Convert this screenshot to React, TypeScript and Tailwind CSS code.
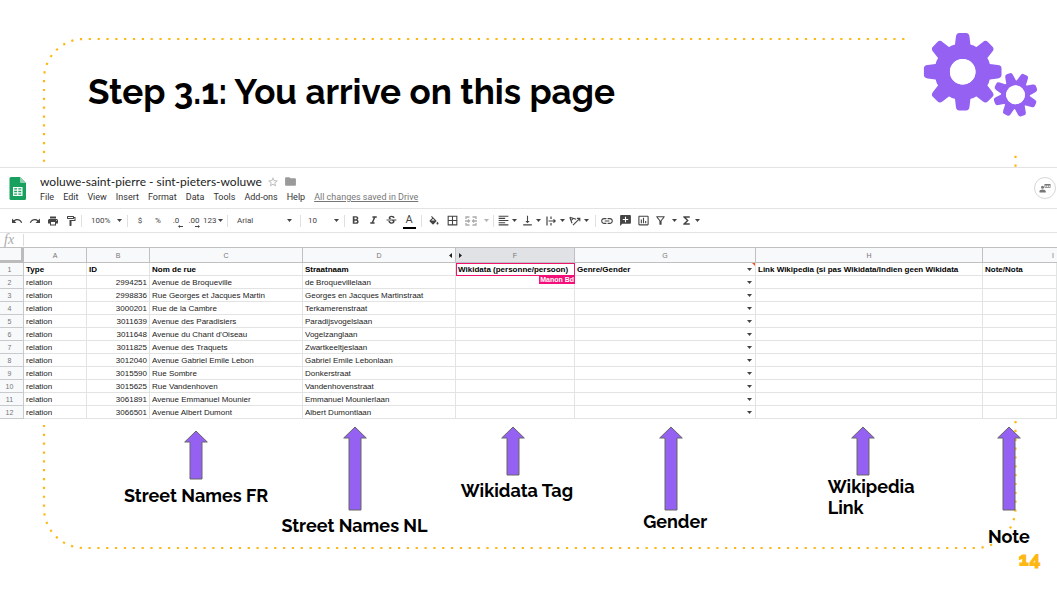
import type { ReactNode } from "react";
import {
  MdUndo,
  MdRedo,
  MdPrint,
  MdOutlineFormatPaint,
  MdFormatBold,
  MdFormatItalic,
  MdStrikethroughS,
  MdBorderAll,
  MdFormatAlignLeft,
  MdVerticalAlignBottom,
  MdLink,
  MdAddComment,
  MdInsertChartOutlined,
  MdOutlineFilterAlt,
  MdFunctions,
  MdFolder,
  MdStarBorder,
} from "react-icons/md";

const BIG_TOOTH =
  "M-8 -20 L-7.7 -27.2 L-6.8 -35 Q-6.4 -38.8 -3.4 -38.8 L3.4 -38.8 Q6.4 -38.8 6.8 -35 L7.7 -27.2 L8 -20 Z";
const SMALL_TOOTH =
  "M-5.6 -11 L-5 -14 L-4.1 -19.6 Q-3.8 -22.2 -1.6 -22.2 L1.6 -22.2 Q3.8 -22.2 4.1 -19.6 L5 -14 L5.6 -11 Z";
const TURNS = [0, 45, 90, 135, 180, 225, 270, 315];

function Gears() {
  return (
    <svg width="116" height="86" viewBox="923 32 116 86" fill="#9461f2" aria-hidden="true">
      <g transform="translate(962.7 71.7)">
        {TURNS.map((a) => (
          <path key={a} d={BIG_TOOTH} transform={`rotate(${a})`} />
        ))}
        <circle r="20.5" fill="none" stroke="#9461f2" strokeWidth="15.4" />
        <circle r="12.8" fill="#fff" />
      </g>
      <g transform="translate(1015.5 94.8) rotate(26)">
        {TURNS.map((a) => (
          <path key={a} d={SMALL_TOOTH} transform={`rotate(${a})`} />
        ))}
        <circle r="11.8" fill="none" stroke="#9461f2" strokeWidth="5" />
        <circle r="9.4" fill="#fff" />
      </g>
    </svg>
  );
}

function DottedFrame() {
  return (
    <svg
      className="absolute inset-0 h-full w-full"
      viewBox="0 0 1057 592"
      preserveAspectRatio="none"
      fill="none"
      aria-hidden="true"
    >
      <path
        d="M904.4 39 H84 A40 40 0 0 0 44 79 V508 A40 40 0 0 0 84 548 H975.5 A40 40 0 0 0 1015.5 508 V155"
        stroke="#fdb813"
        strokeWidth="2.2"
        strokeDasharray="2.2 6.642"
      />
    </svg>
  );
}

function Caret({ faded = false }: { faded?: boolean }) {
  return (
    <svg width="5" height="3" viewBox="0 0 5 3" className={faded ? "shrink-0 opacity-40" : "shrink-0"} aria-hidden="true">
      <path d="M0 0H5L2.5 3Z" fill="#444" />
    </svg>
  );
}

function Tool({ label, children }: { label: string; children: ReactNode }) {
  return (
    <button type="button" aria-label={label} className="flex h-4 w-[18px] shrink-0 items-center justify-center">
      {children}
    </button>
  );
}

function MenuTool({ label, faded, children }: { label: string; faded?: boolean; children: ReactNode }) {
  return (
    <button type="button" aria-label={label} className="flex h-4 w-6 shrink-0 items-center justify-between pr-1">
      {children}
      <Caret faded={faded} />
    </button>
  );
}

function Toolbar() {
  return (
    <div className="flex h-6 items-center overflow-hidden border-b border-[#e2e3e3] text-[8px] text-[#444]">
      <div className="flex h-3 w-[82px] shrink-0 items-center border-r border-[#e0e0e0] pl-2">
        <Tool label="Undo"><MdUndo size={12} /></Tool>
        <Tool label="Redo"><MdRedo size={12} /></Tool>
        <Tool label="Print"><MdPrint size={12} /></Tool>
        <Tool label="Paint format"><MdOutlineFormatPaint size={12} /></Tool>
      </div>
      <label className="flex h-3 w-[46px] shrink-0 items-center border-r border-[#e0e0e0] pr-[5px] pl-[9px]">
        <select aria-label="Zoom" className="min-w-0 flex-1 appearance-none outline-none">
          <option>100%</option>
        </select>
        <Caret />
      </label>
      <div className="flex h-3 w-[100px] shrink-0 items-center border-r border-[#e0e0e0] pl-[3px]">
        <Tool label="Currency">$</Tool>
        <Tool label="Percent">%</Tool>
        <Tool label="Decrease decimals">
          <span className="relative">
            .0
            <svg className="absolute -right-1 -bottom-px" width="5" height="3" viewBox="0 0 5 3" aria-hidden="true">
              <path d="M2 0L0 1.5L2 3V2H5V1H2Z" fill="#444" />
            </svg>
          </span>
        </Tool>
        <Tool label="Increase decimals">
          <span className="relative">
            .00
            <svg className="absolute right-0 -bottom-px" width="5" height="3" viewBox="0 0 5 3" aria-hidden="true">
              <path d="M3 0L5 1.5L3 3V2H0V1H3Z" fill="#444" />
            </svg>
          </span>
        </Tool>
        <button type="button" className="flex items-center gap-px">
          123
          <Caret />
        </button>
      </div>
      <label className="flex h-3 w-[73px] shrink-0 items-center border-r border-[#e0e0e0] pr-2 pl-[9px]">
        <select aria-label="Font" className="min-w-0 flex-1 appearance-none outline-none">
          <option>Arial</option>
        </select>
        <Caret />
      </label>
      <label className="flex h-3 w-11 shrink-0 items-center border-r border-[#e0e0e0] pr-[5px] pl-[7px]">
        <select aria-label="Font size" className="min-w-0 flex-1 appearance-none outline-none">
          <option>10</option>
        </select>
        <Caret />
      </label>
      <div className="flex h-3 w-[77px] shrink-0 items-center border-r border-[#e0e0e0] pl-px">
        <Tool label="Bold"><MdFormatBold size={13} /></Tool>
        <Tool label="Italic"><MdFormatItalic size={13} /></Tool>
        <Tool label="Strikethrough"><MdStrikethroughS size={13} /></Tool>
        <Tool label="Text colour">
          <span className="flex h-4 w-[13px] items-center justify-center border-b-2 border-black pt-px text-[11px]">A</span>
        </Tool>
      </div>
      <div className="flex h-3 w-[72px] shrink-0 items-center border-r border-[#e0e0e0] pl-[3px]">
        <Tool label="Fill colour">
          <svg width="12" height="12" viewBox="0 -2 24 24" fill="#444" aria-hidden="true">
            <path d="M16.56 8.94L7.62 0 6.21 1.41l2.38 2.38-5.15 5.15c-.59.59-.59 1.54 0 2.12l5.5 5.5c.29.29.68.44 1.06.44s.77-.15 1.06-.44l5.5-5.5c.59-.58.59-1.53 0-2.12zM19 11.5s-2 2.17-2 3.5c0 1.1.9 2 2 2s2-.9 2-2c0-1.33-2-3.5-2-3.5z" />
            <path d="M6.5 8.8L10 5.3L13.5 8.8Z" fill="#fff" />
          </svg>
        </Tool>
        <Tool label="Borders"><MdBorderAll size={13} /></Tool>
        <button type="button" aria-label="Merge cells" className="flex h-4 w-7 items-center justify-between pl-1">
          <svg width="12" height="10" viewBox="0 0 12 10" fill="none" stroke="#aaa" strokeWidth="1.3" aria-hidden="true">
            <path d="M1 3V1H4.5M7.5 1H11V3M1 7V9H4.5M7.5 9H11V7M0 5H4M3 3.5L4.5 5L3 6.5M12 5H8M9 3.5L7.5 5L9 6.5" />
          </svg>
          <Caret faded />
        </button>
      </div>
      <div className="flex h-3 w-[102px] shrink-0 items-center border-r border-[#e0e0e0] pl-[3px]">
        <MenuTool label="Horizontal align"><MdFormatAlignLeft size={13} /></MenuTool>
        <MenuTool label="Vertical align"><MdVerticalAlignBottom size={13} /></MenuTool>
        <MenuTool label="Text wrapping">
          <svg width="12" height="10" viewBox="0 0 12 10" fill="none" stroke="#444" strokeWidth="1.2" aria-hidden="true">
            <path d="M2 0.5V9.5M6 0.5V3M6 7V9.5M3.5 5H10M8.5 3.3L10.2 5L8.5 6.7" />
          </svg>
        </MenuTool>
        <MenuTool label="Text rotation">
          <svg width="12" height="10" viewBox="0 0 12 10" fill="none" stroke="#444" strokeWidth="1.1" aria-hidden="true">
            <path d="M0.8 1.2L3 7.2M0.8 1.2L7.2 3.2M2 4.6L4.4 2.4M4 9.2L10.6 2.6M8 2.4H10.8V5.2" />
          </svg>
        </MenuTool>
      </div>
      <div className="flex h-3 items-center pl-[2px]">
        <Tool label="Insert link"><MdLink size={14} /></Tool>
        <Tool label="Insert comment"><MdAddComment size={13} className="-scale-x-100" /></Tool>
        <Tool label="Insert chart"><MdInsertChartOutlined size={13} /></Tool>
        <button type="button" aria-label="Filter" className="flex h-4 w-7 items-center justify-between pr-[3px] pl-[2px]">
          <MdOutlineFilterAlt size={13} />
          <Caret />
        </button>
        <MenuTool label="Functions"><MdFunctions size={13} /></MenuTool>
      </div>
    </div>
  );
}

const MENUS = ["File", "Edit", "View", "Insert", "Format", "Data", "Tools", "Add-ons", "Help"];

function TitleBar() {
  return (
    <div className="flex h-[41px] items-center justify-between border-b border-[#e2e3e3] pr-px pl-2">
      <div className="flex items-center gap-[13px]">
        <svg width="19" height="25" viewBox="0 0 19 25" aria-hidden="true">
          <path d="M3 1H12L18 7V22.5Q18 24 16.5 24H3Q1.5 24 1.5 22.5V2.5Q1.5 1 3 1Z" fill="#18a05e" />
          <path d="M12 1L18 7H13Q12 7 12 6Z" fill="#8ed1b1" />
          <path d="M5 11H14.5V20H5ZM6.2 12.2V13.6H9.1V12.2ZM10.3 12.2V13.6H13.3V12.2ZM6.2 14.8V16.2H9.1V14.8ZM10.3 14.8V16.2H13.3V14.8ZM6.2 17.4V18.8H9.1V17.4ZM10.3 17.4V18.8H13.3V17.4Z" fill="#fff" fillRule="evenodd" />
        </svg>
        <div className="pt-[3px]">
          <div className="flex h-4 items-center">
            <input
              aria-label="Document name"
              defaultValue="woluwe-saint-pierre - sint-pieters-woluwe"
              className="w-[227px] font-['Lato',sans-serif] text-[12px] text-[#222] outline-none"
            />
            <button type="button" aria-label="Star" className="text-[#b8b8b8]"><MdStarBorder size={12} /></button>
            <button type="button" aria-label="Move" className="ml-[5px] text-[#9a9a9a]"><MdFolder size={13} /></button>
          </div>
          <nav className="flex h-4 items-center gap-[9px] text-[9px] text-[#333]">
            {MENUS.map((m) => (
              <button key={m} type="button">{m}</button>
            ))}
            <a href="#saved" className="text-[#777] underline">All changes saved in Drive</a>
          </nav>
        </div>
      </div>
      <button type="button" aria-label="Present" className="flex size-[22px] items-center justify-center rounded-full border border-[#d5d7da]">
        <svg width="12" height="10" viewBox="0 0 12 10" fill="#777" aria-hidden="true">
          <circle cx="3.5" cy="4.3" r="1.5" />
          <path d="M0.5 9.5V8.2Q0.5 6.6 3.5 6.6T6.8 8.2V9.5Z" />
          <path d="M5.5 1H11.5V4.8H5.5ZM6.3 2.5V4H7.5V2.5ZM8.1 2.5V4H9.1V2.5ZM9.7 2.5V4H10.8V2.5Z" fillRule="evenodd" />
        </svg>
      </button>
    </div>
  );
}

const ROWS = [
  ["2994251", "Avenue de Broqueville", "de Broquevillelaan"],
  ["2998836", "Rue Georges et Jacques Martin", "Georges en Jacques Martinstraat"],
  ["3000201", "Rue de la Cambre", "Terkamerenstraat"],
  ["3011639", "Avenue des Paradisiers", "Paradijsvogelslaan"],
  ["3011648", "Avenue du Chant d'Oiseau", "Vogelzanglaan"],
  ["3011825", "Avenue des Traquets", "Zwartkeeltjeslaan"],
  ["3012040", "Avenue Gabriel Emile Lebon", "Gabriel Emile Lebonlaan"],
  ["3015590", "Rue Sombre", "Donkerstraat"],
  ["3015625", "Rue Vandenhoven", "Vandenhovenstraat"],
  ["3061891", "Avenue Emmanuel Mounier", "Emmanuel Mounierlaan"],
  ["3066501", "Avenue Albert Dumont", "Albert Dumontlaan"],
];

const CELL = "h-[13px] overflow-hidden border-r border-b border-[#e2e3e3] px-[2px] pt-px pb-0 whitespace-nowrap";
const HEAD = "h-[15px] border-r border-b border-[#c0c0c0] bg-[#f8f9fa] p-0 text-center text-[7px] font-normal text-[#777]";
const ROWNUM = "h-[13px] border-r border-b border-[#c8cacc] bg-[#f8f9fa] pt-px pr-1 pb-0 pl-0 text-center text-[7px] font-normal text-[#777]";

function DropCell() {
  return (
    <button type="button" aria-label="Choose gender" className="flex h-[11px] w-[6px] items-center">
      <Caret />
    </button>
  );
}

function Grid() {
  return (
    <table className="w-full table-fixed border-separate border-spacing-0 font-['Liberation_Sans',Arial,sans-serif] text-[8px] leading-[11px] text-[#222]">
      <colgroup>
        <col className="w-6" />
        <col className="w-[63px]" />
        <col className="w-[63px]" />
        <col className="w-[153px]" />
        <col className="w-[153px]" />
        <col className="w-[119px]" />
        <col className="w-[181px]" />
        <col className="w-[227px]" />
        <col />
      </colgroup>
      <thead>
        <tr>
          <td className="h-[15px] border-r-3 border-b-3 border-[#bcbcbc] bg-[#f8f9fa] p-0" />
          <th className={HEAD}>A</th>
          <th className={HEAD}>B</th>
          <th className={HEAD}>C</th>
          <th className={HEAD}>
            <div className="flex items-center pr-[3px] pl-[6px]">
              <span className="flex-1">D</span>
              <svg width="3" height="5" viewBox="0 0 3 5" aria-hidden="true"><path d="M3 0V5L0 2.5Z" fill="#222" /></svg>
            </div>
          </th>
          <th className="h-[15px] border-r border-b border-[#c0c0c0] bg-[#e0e2e6] p-0 text-center text-[7px] font-normal text-[#777]">
            <div className="flex items-center pr-[6px] pl-[3px]">
              <svg width="3" height="5" viewBox="0 0 3 5" aria-hidden="true"><path d="M0 0V5L3 2.5Z" fill="#222" /></svg>
              <span className="flex-1">F</span>
            </div>
          </th>
          <th className={HEAD}>G</th>
          <th className={HEAD}>H</th>
          <th className="h-[15px] border-b border-[#c0c0c0] bg-[#f8f9fa] p-0 pr-[3px] text-right text-[7px] font-normal text-[#777]">I</th>
        </tr>
      </thead>
      <tbody>
        <tr className="font-bold text-black">
          <th className={ROWNUM}>1</th>
          <td className={CELL}>Type</td>
          <td className={CELL}>ID</td>
          <td className={CELL}>Nom de rue</td>
          <td className={CELL}>Straatnaam</td>
          <td className="relative h-[13px] border border-[#f0146e] px-px py-0 whitespace-nowrap">
            Wikidata (personne/persoon)
            <span className="absolute top-full right-[-1px] z-10 h-[9px] bg-[#f50f78] px-px text-[7px] leading-[9px] text-white">Manon Bd</span>
          </td>
          <td className={CELL}>
            <div className="relative flex items-center justify-between">
              Genre/Gender
              <DropCell />
              <svg className="absolute -top-px right-[-2px]" width="3" height="3" viewBox="0 0 3 3" aria-hidden="true"><path d="M0 0H3V3Z" fill="#f4511e" /></svg>
            </div>
          </td>
          <td className={CELL}>Link Wikipedia (si pas Wikidata/Indien geen Wikidata</td>
          <td className={CELL}>Note/Nota</td>
        </tr>
        {ROWS.map(([id, fr, nl], i) => (
          <tr key={id}>
            <th className={ROWNUM}>{i + 2}</th>
            <td className={CELL}>relation</td>
            <td className="h-[13px] border-r border-b border-[#e2e3e3] px-[2px] pt-px pb-0 text-right">{id}</td>
            <td className={CELL}>{fr}</td>
            <td className={CELL}>{nl}</td>
            <td className={CELL} />
            <td className={CELL}>
              <div className="flex justify-end"><DropCell /></div>
            </td>
            <td className={CELL} />
            <td className={CELL} />
          </tr>
        ))}
      </tbody>
    </table>
  );
}

function Arrow({ long = false }: { long?: boolean }) {
  const end = long ? 84 : 49;
  return (
    <svg width="26" height={end + 1} viewBox={`0 0 26 ${end + 1}`} className="shrink-0" aria-hidden="true">
      <path
        d={`M13 1L24.3 12H19V${end}H7V12H1.7Z`}
        fill="#9461f2"
        stroke="#666"
        strokeWidth="1"
      />
    </svg>
  );
}

export default function App() {
  return (
    <main className="relative flex min-h-screen flex-col overflow-hidden bg-white font-['Raleway','Lato',sans-serif] text-black">
      <DottedFrame />
      <header className="relative flex h-[167px] items-start justify-between pt-8 pr-[18px] pl-[88px]">
        <h1 className="pt-9 text-[35px] leading-12 font-bold [font-variant-numeric:oldstyle-nums]">
          Step 3.1: You arrive on this page
        </h1>
        <Gears />
      </header>

      <section className="relative border-t border-[#e2e3e3] bg-white pb-px font-['Roboto',sans-serif]">
        <TitleBar />
        <Toolbar />
        <label className="flex h-[15px] items-center border-b border-[#c0c0c0]">
          <span className="w-6 border-r border-[#ddd] pl-1 font-['Liberation_Serif',serif] text-[14px] leading-3 text-[#aaa] italic">fx</span>
          <input aria-label="Formula" className="h-3 flex-1 px-1 text-[8px] outline-none" />
        </label>
        <Grid />
      </section>

      <section className="relative grid grid-cols-[158fr_158fr_158fr_158fr_225fr_66fr] pt-[6px] pr-[15px] pl-[117px] text-[18px] leading-[21px] font-bold whitespace-nowrap">
        <div className="flex flex-col items-center gap-[5px] pt-1">
          <Arrow />
          <p>Street Names FR</p>
        </div>
        <div className="flex flex-col items-center gap-1">
          <Arrow long />
          <p>Street Names NL</p>
        </div>
        <div className="flex flex-col items-center gap-1">
          <Arrow />
          <p className="pl-2">Wikidata Tag</p>
        </div>
        <div className="flex flex-col items-center">
          <Arrow long />
          <p className="pl-2">Gender</p>
        </div>
        <div className="flex flex-col items-center">
          <Arrow />
          <p className="pl-4">Wikipedia<br />Link</p>
        </div>
        <div className="flex flex-col items-center gap-[15px]">
          <Arrow long />
          <p>Note</p>
        </div>
      </section>
      <footer className="relative pr-4 text-right text-[20px] leading-6 font-black text-[#fdb813] [font-variant-numeric:oldstyle-nums]">
        14
      </footer>
    </main>
  );
}
